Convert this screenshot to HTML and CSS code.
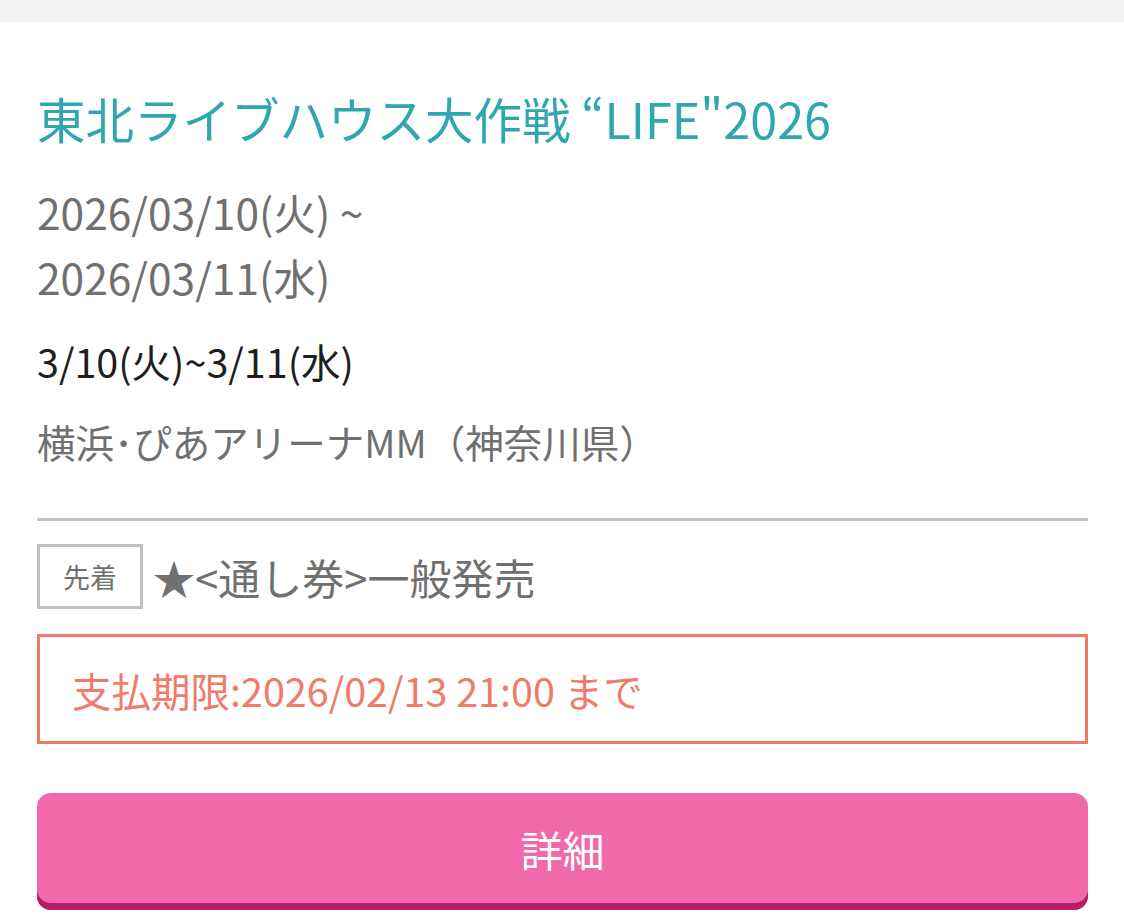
FILE: index.html
```html
<!DOCTYPE html>
<html lang="ja">
<head>
<meta charset="utf-8">
<link rel="stylesheet" href="styles.css">
</head>
<body>
<div class="topbar"></div>
<div class="card">
  <h1 class="title">東北ライブハウス大作戦 “LIFE"2026</h1>
  <div class="dates">2026/03/10(火) ~<br>2026/03/11(水)</div>
  <div class="short">3/10(火)~3/11(水)</div>
  <div class="venue">横浜･ぴあアリーナMM（神奈川県）</div>
  <hr class="divider">
  <div class="sale">
    <span class="tag">先着</span>
    <span class="sale-name">★&lt;通し券&gt;一般発売</span>
  </div>
  <div class="deadline">支払期限:2026/02/13 21:00 まで</div>
  <button class="detail">詳細</button>
</div>
</body>
</html>
```
FILE: styles.css
```css
html, body {
  margin: 0;
  padding: 0;
  background: #fff;
}
body {
  font-family: "Noto Sans CJK JP", "Noto Sans", sans-serif;
  width: 1124px;
  height: 923px;
  overflow: hidden;
}
.topbar {
  height: 22px;
  background: #f2f2f2;
}
.card {
  padding: 64px 36px 0 37px;
}
.title {
  margin: 0;
  font-size: 48.5px;
  font-weight: 400;
  line-height: 64px;
  color: #2fa7b1;
}
.dates {
  margin-top: 29px;
  font-size: 42.5px;
  line-height: 65px;
  color: #707070;
}
.short {
  margin-top: 20px;
  font-size: 39.5px;
  font-weight: 400;
  line-height: 64px;
  color: #1e1e1e;
}
.venue {
  margin-top: 16px;
  font-size: 38.5px;
  line-height: 64px;
  color: #707070;
}
.divider {
  margin: 45px 0 0;
  border: 0;
  height: 3px;
  background: #c0c0c0;
}
.sale {
  margin-top: 23px;
  display: flex;
  align-items: center;
  gap: 10px;
}
.tag {
  box-sizing: border-box;
  width: 106px;
  height: 65px;
  border: 3px solid #c0c0c0;
  display: flex;
  align-items: center;
  justify-content: center;
  font-size: 27px;
  color: #707070;
}
.sale-name {
  font-size: 42px;
  color: #707070;
}
.deadline {
  margin-top: 25px;
  box-sizing: border-box;
  height: 110px;
  border: 3px solid #f07b69;
  display: flex;
  align-items: center;
  padding-left: 32px;
  font-size: 39.5px;
  font-weight: 400;
  color: #f07b69;
}
.detail {
  margin-top: 49px;
  display: block;
  width: 100%;
  height: 117px;
  border: 0;
  border-radius: 14px;
  background: #f06aa9;
  box-shadow: inset 0 -7px 0 #b91b64;
  color: #fff;
  font-family: inherit;
  font-size: 42px;
  padding: 0 0 7px;
}
```
